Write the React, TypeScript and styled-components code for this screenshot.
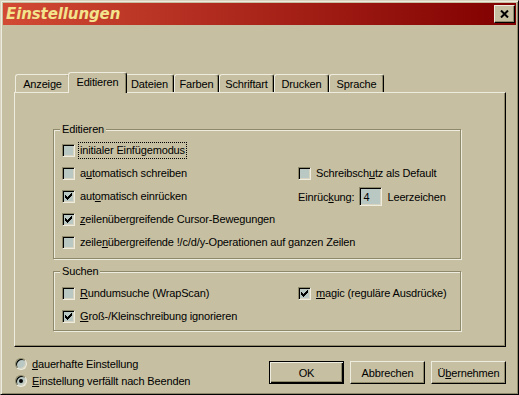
import React from 'react';
import styled, { createGlobalStyle } from 'styled-components';

const C = {
  face: '#c6bfa1',
  light: '#d8d4c0',
  hi: '#eeecdf',
  shadow: '#8d896a',
  dark: '#000000',
  field: '#b9c8c3',
};

const Global = createGlobalStyle`
  html, body { margin: 0; padding: 0; background: ${C.face}; }
  body { font-family: "Liberation Sans", Arial, sans-serif; font-size: 11px; color: #000; letter-spacing: -0.15px; }
  * { box-sizing: border-box; }
  u { text-decoration-thickness: 1px; text-underline-offset: 1px; }
`;

const Window = styled.div`
  width: 519px;
  height: 395px;
  background: ${C.face};
  border: 1px solid;
  border-color: ${C.light} ${C.dark} ${C.dark} ${C.light};
  box-shadow: inset 1px 1px 0 ${C.hi}, inset -1px -1px 0 ${C.shadow};
  padding: 2px;
  display: flex;
  flex-direction: column;
`;

const TitleBar = styled.div`
  height: 22px;
  flex: none;
  background: linear-gradient(to right, #d24a34, #800000);
  display: flex;
  align-items: center;
  justify-content: space-between;
  padding: 0 1px 0 3px;
`;

const Title = styled.span`
  font-family: "DejaVu Sans", Verdana, sans-serif;
  font-weight: bold;
  font-style: italic;
  font-size: 15px;
  color: #f2e38c;
  letter-spacing: -0.1px;
`;

const CloseButton = styled.div`
  width: 21px;
  height: 18px;
  background: ${C.face};
  border: 1px solid;
  border-color: ${C.hi} ${C.dark} ${C.dark} ${C.hi};
  box-shadow: inset -1px -1px 0 ${C.shadow};
  display: flex;
  align-items: center;
  justify-content: center;
`;

const Body = styled.div`
  flex: 1;
  display: flex;
  flex-direction: column;
  padding: 0 10px 0 11px;
`;

const TabStrip = styled.div`
  margin-top: 47px;
  height: 20px;
  display: flex;
  align-items: flex-end;
  padding-left: 1px;
`;

const Tab = styled.div<{ $w: number; $active?: boolean }>`
  position: relative;
  z-index: ${p => (p.$active ? 2 : 1)};
  flex: none;
  width: ${p => p.$w}px;
  height: ${p => (p.$active ? 21 : 18)}px;
  margin: 0 ${p => (p.$active ? -2 : 0)}px ${p => (p.$active ? -1 : 0)}px;
  background: ${C.face};
  border-top: 1px solid ${C.hi};
  border-left: 1px solid ${C.hi};
  border-right: 1px solid ${C.dark};
  box-shadow: inset -1px 0 0 ${C.shadow};
  border-radius: 3px 3px 0 0;
  display: flex;
  align-items: center;
  justify-content: center;
  padding-bottom: ${p => (p.$active ? 3 : 0)}px;
  white-space: nowrap;
`;

const Panel = styled.div`
  height: 255px;
  flex: none;
  border: 1px solid;
  border-color: ${C.hi} ${C.dark} ${C.dark} ${C.hi};
  box-shadow: inset -1px -1px 0 ${C.shadow};
  padding: 36px 44px 0 38px;
  display: flex;
  flex-direction: column;
`;

const Group = styled.div<{ $pt: number; $pb: number; $mt?: number }>`
  position: relative;
  margin-top: ${p => p.$mt ?? 0}px;
  border: 1px solid ${C.shadow};
  box-shadow: 1px 1px 0 ${C.hi}, inset 1px 1px 0 ${C.hi};
  padding: ${p => p.$pt}px 8px ${p => p.$pb}px 8px;
  display: grid;
  grid-template-columns: 236px 1fr;
  grid-auto-rows: 23px;
`;

const Legend = styled.span`
  position: absolute;
  top: -7px;
  left: 6px;
  padding: 0 2px;
  line-height: 13px;
  background: ${C.face};
`;

const Row = styled.label<{ $span?: boolean }>`
  display: flex;
  align-items: center;
  gap: 5px;
  white-space: nowrap;
  grid-column: ${p => (p.$span ? '1 / -1' : 'auto')};
`;

const Box = styled.span`
  flex: none;
  width: 13px;
  height: 13px;
  background: ${C.field};
  border: 1px solid;
  border-color: ${C.shadow} ${C.hi} ${C.hi} ${C.shadow};
  box-shadow: inset 1px 1px 0 ${C.dark}, inset -1px -1px 0 ${C.light};
  display: flex;
  align-items: center;
  justify-content: center;
`;

const Caption = styled.span<{ $focus?: boolean }>`
  padding: 1px 1px 2px;
  margin-left: -1px;
  line-height: 12px;
  outline: ${p => (p.$focus ? `1px dotted ${C.dark}` : 'none')};
`;

const Field = styled.span`
  width: 23px;
  height: 19px;
  background: ${C.field};
  border: 1px solid;
  border-color: ${C.shadow} ${C.hi} ${C.hi} ${C.shadow};
  box-shadow: inset 1px 1px 0 ${C.dark}, inset -1px -1px 0 ${C.light};
  padding: 0 3px;
  display: flex;
  align-items: center;
`;

const Footer = styled.div`
  display: flex;
  justify-content: space-between;
  align-items: flex-start;
`;

const RadioList = styled.div`
  margin-top: 8px;
  padding-left: 1px;
  display: flex;
  flex-direction: column;
`;

const RadioRow = styled.label`
  height: 17px;
  display: flex;
  align-items: center;
  gap: 5px;
  white-space: nowrap;
`;

const RadioDot = styled.span`
  flex: none;
  width: 12px;
  height: 12px;
  border-radius: 50%;
  background: ${C.field};
  border: 1px solid;
  border-color: ${C.shadow} ${C.hi} ${C.hi} ${C.shadow};
  box-shadow: inset 1px 1px 0 ${C.dark}, inset -1px -1px 0 ${C.light};
  display: flex;
  align-items: center;
  justify-content: center;
`;

const Dot = styled.span`
  width: 4px;
  height: 4px;
  border-radius: 50%;
  background: ${C.dark};
`;

const Buttons = styled.div`
  margin-top: 14px;
  display: flex;
  gap: 6px;
`;

const Button = styled.div<{ $default?: boolean }>`
  width: 75px;
  height: 23px;
  background: ${C.face};
  border: 1px solid;
  border-color: ${p => (p.$default ? `${C.dark}` : `${C.hi} ${C.dark} ${C.dark} ${C.hi}`)};
  box-shadow: ${p =>
    p.$default
      ? `inset 1px 1px 0 ${C.hi}, inset -1px -1px 0 ${C.dark}, inset -2px -2px 0 ${C.shadow}`
      : `inset -1px -1px 0 ${C.shadow}`};
  display: flex;
  align-items: center;
  justify-content: center;
`;

const CheckMark = () => (
  <svg width="7" height="7" viewBox="0 0 7 7" shapeRendering="crispEdges">
    {[2, 3, 4, 3, 2, 1, 0].map((y, x) => (
      <rect key={x} x={x} y={y} width="1" height="3" fill="#000" />
    ))}
  </svg>
);

const Check = ({ on }: { on?: boolean }) => <Box>{on && <CheckMark />}</Box>;

const tabs: { label: string; w: number; active?: boolean }[] = [
  { label: 'Anzeige', w: 55 },
  { label: 'Editieren', w: 59, active: true },
  { label: 'Dateien', w: 49 },
  { label: 'Farben', w: 45 },
  { label: 'Schriftart', w: 55 },
  { label: 'Drucken', w: 55 },
  { label: 'Sprache', w: 55 },
];

export default function App() {
  return (
    <>
      <Global />
      <Window>
        <TitleBar>
          <Title>Einstellungen</Title>
          <CloseButton>
            <svg width="9" height="8" viewBox="0 0 9 8">
              <path d="M1 0.5 L8 7.5 M8 0.5 L1 7.5" stroke="#000" strokeWidth="2" />
            </svg>
          </CloseButton>
        </TitleBar>
        <Body>
          <TabStrip>
            {tabs.map(t => (
              <Tab key={t.label} $w={t.w} $active={t.active}>
                {t.label}
              </Tab>
            ))}
          </TabStrip>
          <Panel>
            <Group $pt={9} $pb={4}>
              <Legend>Editieren</Legend>
              <Row $span>
                <Check />
                <Caption $focus>initialer Einfügemodus</Caption>
              </Row>
              <Row>
                <Check />
                <Caption>a<u>u</u>tomatisch schreiben</Caption>
              </Row>
              <Row>
                <Check />
                <Caption>Schreibsch<u>u</u>tz als Default</Caption>
              </Row>
              <Row>
                <Check on />
                <Caption>aut<u>o</u>matisch einrücken</Caption>
              </Row>
              <Row>
                <span>Einrüc<u>k</u>ung:</span>
                <Field>4</Field>
                <span>Leerzeichen</span>
              </Row>
              <Row $span>
                <Check on />
                <Caption><u>z</u>eilenübergreifende Cursor-Bewegungen</Caption>
              </Row>
              <Row $span>
                <Check />
                <Caption>zeile<u>n</u>übergreifende !/c/d/y-Operationen auf ganzen Zeilen</Caption>
              </Row>
            </Group>
            <Group $pt={10} $pb={2} $mt={12}>
              <Legend>Suchen</Legend>
              <Row>
                <Check />
                <Caption><u>R</u>undumsuche (WrapScan)</Caption>
              </Row>
              <Row>
                <Check on />
                <Caption><u>m</u>agic (reguläre Ausdrücke)</Caption>
              </Row>
              <Row $span>
                <Check on />
                <Caption><u>G</u>roß-/Kleinschreibung ignorieren</Caption>
              </Row>
            </Group>
          </Panel>
          <Footer>
            <RadioList>
              <RadioRow>
                <RadioDot />
                <span><u>d</u>auerhafte Einstellung</span>
              </RadioRow>
              <RadioRow>
                <RadioDot>
                  <Dot />
                </RadioDot>
                <span><u>E</u>instellung verfällt nach Beenden</span>
              </RadioRow>
            </RadioList>
            <Buttons>
              <Button $default>OK</Button>
              <Button>Abbrechen</Button>
              <Button>Ü<u>b</u>ernehmen</Button>
            </Buttons>
          </Footer>
        </Body>
      </Window>
    </>
  );
}
